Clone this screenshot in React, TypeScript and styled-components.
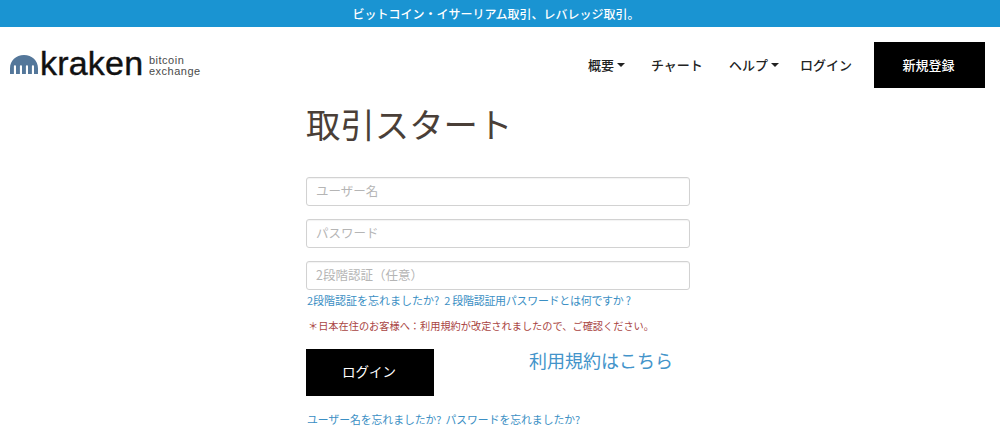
import styled, { createGlobalStyle } from "styled-components";

const FONT = `"Noto Sans CJK JP", "Liberation Sans", sans-serif`;

const GlobalStyle = createGlobalStyle`
  html, body {
    margin: 0;
    padding: 0;
    background: #fff;
    font-family: ${FONT};
  }
  * { box-sizing: border-box; }
  a { text-decoration: none; }
`;

const KrakenMark = () => (
  <MarkSvg viewBox="0 0 28 19" aria-hidden="true">
    <path
      d="M0 19 V13.5 C0 5.5 6 0 14 0 C22 0 28 5.5 28 13.5 V19 H24 V11.5 C24 9.8 21.9 9.8 21.9 11.5 V19 H18 V11.5 C18 9.8 15.9 9.8 15.9 11.5 V19 H12 V11.5 C12 9.8 9.9 9.8 9.9 11.5 V19 H6 V11.5 C6 9.8 3.9 9.8 3.9 11.5 V19 Z"
      fill="#54779a"
    />
  </MarkSvg>
);

const Caret = () => <CaretShape />;

const App = () => {
  return (
    <>
      <GlobalStyle />
      <Banner>ビットコイン・イサーリアム取引、レバレッジ取引。</Banner>
      <Header>
        <Logo>
          <KrakenMark />
          <Wordmark>kraken</Wordmark>
          <Tagline>
            bitcoin
            <br />
            exchange
          </Tagline>
        </Logo>
        <Nav>
          <NavItem $width={63}>
            概要
            <Caret />
          </NavItem>
          <NavItem $width={78}>チャート</NavItem>
          <NavItem $width={71}>
            ヘルプ
            <Caret />
          </NavItem>
          <NavItem $width={74}>ログイン</NavItem>
          <SignUp>新規登録</SignUp>
        </Nav>
      </Header>
      <Main>
        <Title>取引スタート</Title>
        <Field placeholder="ユーザー名" />
        <Field placeholder="パスワード" />
        <Field placeholder="2段階認証（任意）" />
        <HelpLinks>
          <HelpLink href="#">2段階認証を忘れましたか?</HelpLink>
          <HelpLink href="#" $tight>
            2 段階認証用パスワードとは何ですか ?
          </HelpLink>
        </HelpLinks>
        <Notice>＊日本在住のお客様へ：利用規約が改定されましたので、ご確認ください。</Notice>
        <ActionRow>
          <LoginButton>ログイン</LoginButton>
          <TermsLink href="#">利用規約はこちら</TermsLink>
        </ActionRow>
        <ForgotLinks>
          <ForgotLink href="#">ユーザー名を忘れましたか?</ForgotLink>
          <ForgotLink href="#">パスワードを忘れましたか?</ForgotLink>
        </ForgotLinks>
      </Main>
    </>
  );
};

const Banner = styled.div`
  height: 27px;
  background-color: #1a94d2;
  color: #fff;
  font-size: 12px;
  font-weight: 500;
  line-height: 27px;
  text-align: center;
  padding-right: 8px;
`;

const Header = styled.header`
  height: 70px;
  display: flex;
  align-items: flex-start;
  justify-content: space-between;
  padding: 15px 15px 0 10px;
`;

const Logo = styled.div`
  display: flex;
  align-items: center;
  height: 46px;
`;

const MarkSvg = styled.svg`
  width: 28px;
  height: 19px;
  margin-bottom: 1px;
`;

const Wordmark = styled.span`
  font-family: "Liberation Sans", sans-serif;
  font-size: 34px;
  line-height: 46px;
  color: #111;
  margin: -4px 0 0 2px;
  width: 107px;
  letter-spacing: 0.2px;
  -webkit-text-stroke: 0.4px #111;
`;

const Tagline = styled.span`
  font-family: "Liberation Sans", sans-serif;
  font-size: 11px;
  line-height: 11px;
  letter-spacing: 0.5px;
  color: #4a4a4a;
  margin: 1px 0 0 2px;
`;

const Nav = styled.nav`
  display: flex;
  align-items: center;
`;

const NavItem = styled.a<{ $width: number }>`
  width: ${(p) => p.$width}px;
  display: flex;
  align-items: center;
  font-size: 13px;
  font-weight: 500;
  color: #222;
  height: 46px;
  padding-bottom: 2px;
`;

const CaretShape = styled.span`
  width: 0;
  height: 0;
  margin: 2px 0 0 3px;
  border-left: 4px solid transparent;
  border-right: 4px solid transparent;
  border-top: 4px solid #222;
`;

const SignUp = styled.button`
  width: 111px;
  height: 46px;
  padding: 0 8px 1px 6px;
  border: 0;
  background-color: #000;
  color: #fff;
  font-family: ${FONT};
  font-size: 13px;
  font-weight: 500;
`;

const Main = styled.main`
  width: 690px;
  padding-left: 306px;
`;

const Title = styled.h1`
  margin: 0 0 30px;
  height: 50px;
  font-size: 34.4px;
  font-weight: 400;
  line-height: 52px;
  color: #4a3f38;
`;

const Field = styled.input`
  display: block;
  width: 100%;
  height: 29px;
  margin-bottom: 13px;
  padding: 0 9px 2px;
  border: 1px solid #d2d2d2;
  border-radius: 3px;
  font-family: ${FONT};
  font-size: 12.5px;
  box-shadow: inset 0 1px 1px rgba(0, 0, 0, 0.05);

  &::placeholder {
    color: #b5b5b5;
  }
`;

const HelpLinks = styled.div`
  display: flex;
  gap: 5px;
  margin: -14px 0 0 1px;
  height: 22px;
  line-height: 22px;
`;

const HelpLink = styled.a<{ $tight?: boolean }>`
  font-size: 11px;
  color: #3b8fc4;
  letter-spacing: ${(p) => (p.$tight ? "-0.3px" : "0")};
`;

const Notice = styled.p`
  margin: 5px 0 0 2px;
  height: 20px;
  font-size: 10.2px;
  line-height: 20px;
  color: #a94442;
  white-space: nowrap;
`;

const ActionRow = styled.div`
  display: flex;
  align-items: flex-start;
  margin-top: 13px;
`;

const LoginButton = styled.button`
  width: 128px;
  height: 47px;
  border: 0;
  padding: 0 2px 3px 0;
  background-color: #000;
  color: #fff;
  font-family: ${FONT};
  font-size: 13.5px;
`;

const TermsLink = styled.a`
  margin: -2px 0 0 95px;
  font-size: 18px;
  line-height: 26px;
  color: #4394ca;
`;

const ForgotLinks = styled.div`
  display: flex;
  gap: 4px;
  margin: 13px 0 0 1px;
  line-height: 20px;
`;

const ForgotLink = styled.a`
  font-size: 10.8px;
  color: #3b8fc4;
`;

export default App;
